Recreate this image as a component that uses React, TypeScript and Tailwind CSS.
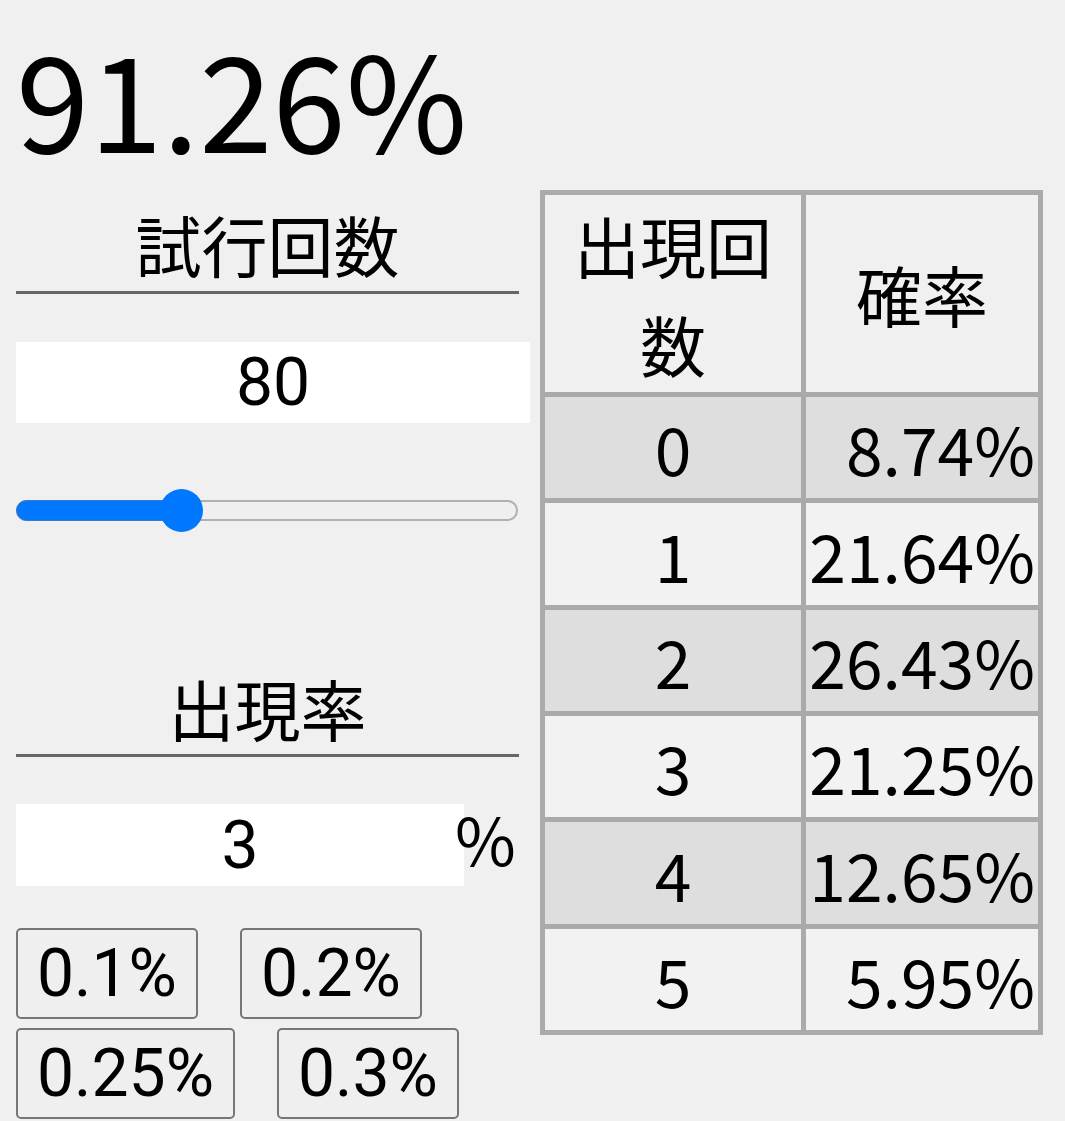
import React from "react";

const rows: [string, string][] = [
  ["0", "8.74%"],
  ["1", "21.64%"],
  ["2", "26.43%"],
  ["3", "21.25%"],
  ["4", "12.65%"],
  ["5", "5.95%"],
];

const rowHeights = ["h-[106px]", "h-[107px]", "h-[106px]", "h-[106px]", "h-[107px]", "h-[106px]"];

export default function App() {
  return (
    <div className="min-h-screen w-full bg-[#f0f0f0] pl-[16px] text-black font-['Noto_Sans_CJK_JP',sans-serif]">
      <div className="h-[184px] text-[132px] leading-[191px] whitespace-nowrap">91.26%</div>
      <div className="flex items-start">
        {/* left column */}
        <div className="w-[514px] pt-[30px] flex flex-col">
          <div className="w-[503px] h-[80px] border-b-[3px] border-[#666666] text-center text-[66px] leading-[58px]">
            試行回数
          </div>
          <div className="mt-[48px] w-[514px] h-[81px] bg-white flex items-center justify-center font-['Roboto',sans-serif] text-[66px]">
            80
          </div>
          <div className="mt-[66px] relative w-[502px] h-[43px] flex items-center">
            <div className="w-full h-[21px] rounded-full border-2 border-[#b0b0b0] bg-[#efefef]" />
            <div className="absolute left-0 top-[11px] w-[175px] h-[21px] rounded-full bg-[#0077ff] border border-[#3a78c8]" />
            <div className="absolute left-[144px] top-0 w-[43px] h-[43px] rounded-full bg-[#0077ff]" />
          </div>
          <div className="mt-[145px] w-[503px] h-[80px] border-b-[3px] border-[#666666] text-center text-[66px] leading-[60px]">
            出現率
          </div>
          <div className="mt-[47px] flex items-center h-[82px]">
            <div className="w-[448px] h-[82px] bg-white flex items-center justify-center font-['Roboto',sans-serif] text-[66px]">
              3
            </div>
            <span className="-ml-[9px] mb-[16px] text-[66px] leading-[82px]">%</span>
          </div>
          <div className="mt-[42px] flex flex-wrap gap-x-[42px] gap-y-[9px] font-['Roboto',sans-serif]">
            {["0.1%", "0.2%", "0.25%", "0.3%"].map((t) => (
              <button
                key={t}
                className="h-[91px] px-[19px] bg-[#efefef] border-2 border-[#767676] rounded-[5px] text-[66px] leading-[77px] text-black"
              >
                {t}
              </button>
            ))}
          </div>
        </div>

        {/* table */}
        <div className="ml-[10px] mt-[6px] w-[503px] border-l-[5px] border-t-[5px] border-[#aaaaaa] grid grid-cols-[261px_237px] text-[66px]">
          <div className="h-[202px] border-r-[5px] border-b-[5px] border-[#aaaaaa] bg-[#f0f0f0] flex items-center justify-center text-center px-[1px]">
            出現回数
          </div>
          <div className="h-[202px] border-r-[5px] border-b-[5px] border-[#aaaaaa] bg-[#f0f0f0] flex items-center justify-center text-center">
            確率
          </div>
          {rows.map(([n, p], i) => (
            <React.Fragment key={n}>
              <div
                className={`${rowHeights[i]} border-r-[5px] border-b-[5px] border-[#aaaaaa] flex items-center justify-center ${
                  i % 2 === 0 ? "bg-[#dedede]" : "bg-[#f2f2f2]"
                }`}
              >
                {n}
              </div>
              <div
                className={`${rowHeights[i]} border-r-[5px] border-b-[5px] border-[#aaaaaa] flex items-center justify-end pr-[3px] whitespace-nowrap ${
                  i % 2 === 0 ? "bg-[#dedede]" : "bg-[#f2f2f2]"
                }`}
              >
                {p}
              </div>
            </React.Fragment>
          ))}
        </div>
      </div>
    </div>
  );
}
